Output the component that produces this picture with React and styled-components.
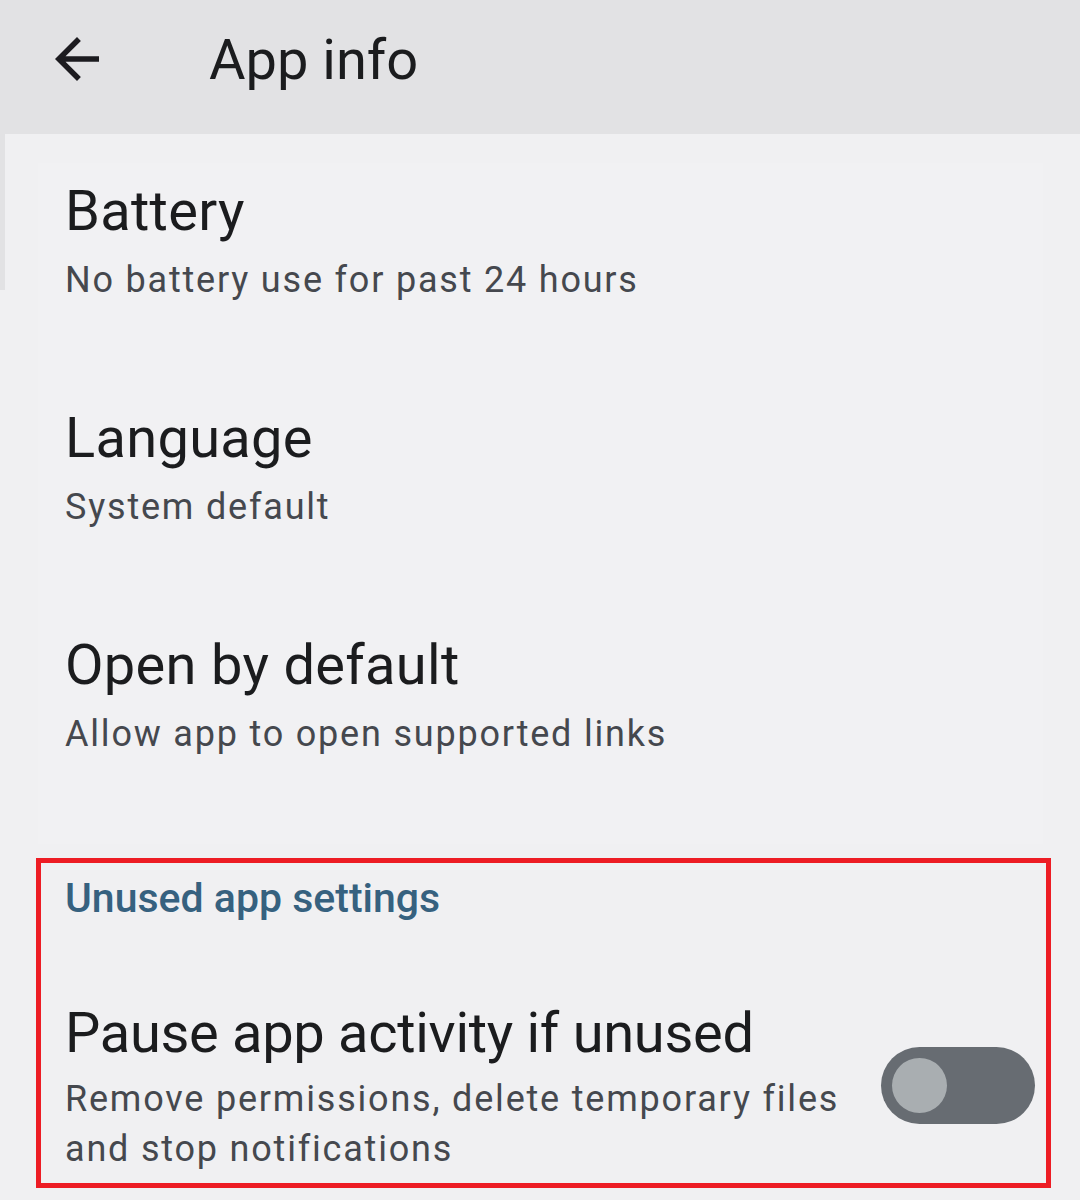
import React from "react";
import styled, { createGlobalStyle } from "styled-components";

const Global = createGlobalStyle`
  html, body { margin: 0; padding: 0; }
  body {
    background: #f0f0f2;
    font-family: Roboto, "Noto Sans", "Liberation Sans", sans-serif;
    -webkit-font-smoothing: antialiased;
  }
  * { box-sizing: border-box; }
`;

const Screen = styled.div`
  width: 1080px;
  height: 1200px;
  background: #f0f0f2;
  overflow: hidden;
  display: flex;
  flex-direction: column;
`;

const TopBar = styled.header`
  height: 134px;
  flex: none;
  background: #e2e2e4;
  display: flex;
  align-items: flex-start;
  padding: 26px 0 0 44px;
  gap: 99px;
`;

const BackButton = styled.button`
  width: 66px;
  height: 66px;
  margin-top: 0;
  padding: 0;
  border: none;
  background: transparent;
  color: #1c1b1f;
  display: flex;
  align-items: center;
  justify-content: center;
  svg { width: 66px; height: 66px; display: block; }
`;

const Title = styled.h1`
  margin: 0;
  font-size: 56px;
  line-height: 68px;
  font-weight: 400;
  color: #1b1c1e;
`;

const Content = styled.main`
  position: relative;
  flex: 1;
  padding: 29px 0 0 0;
  &::before {
    content: "";
    position: absolute;
    left: 0;
    top: 0;
    width: 5px;
    height: 156px;
    background: #e2e2e4;
  }
`;

const Card = styled.section`
  margin: 0 37px 0 38px;
  background: #f1f1f3;
  display: flex;
  flex-direction: column;
`;

const Item = styled.div`
  padding: 16px 24px 85px 27px;
  display: flex;
  flex-direction: column;
  gap: 12px;
`;

const ItemTitle = styled.div`
  font-size: 56px;
  line-height: 64px;
  color: #1b1c1e;
  letter-spacing: ${(p) => p.$spacing || "0.3px"};
`;

const ItemSub = styled.div`
  font-size: 36px;
  line-height: 50px;
  color: #45484e;
  letter-spacing: 1.8px;
`;

const Highlight = styled.section`
  margin: 14px 29px 0 36px;
  border: 5px solid #ed1c24;
  padding: 10px 11px 9px 24px;
  display: flex;
  flex-direction: column;
  gap: 78px;
`;

const SectionHeader = styled.div`
  font-size: 41px;
  line-height: 50px;
  font-weight: 500;
  color: #36617f;
`;

const ToggleRow = styled.div`
  display: flex;
  align-items: center;
  justify-content: space-between;
  gap: 20px;
`;

const ToggleText = styled.div`
  display: flex;
  flex-direction: column;
  gap: 9px;
  max-width: 790px;
`;

const Track = styled.div`
  flex: none;
  width: 154px;
  height: 77px;
  margin-top: -4px;
  border-radius: 39px;
  background: ${(p) => (p.$on ? "#35607f" : "#676c72")};
  display: flex;
  align-items: center;
  padding: 0 11px;
  justify-content: ${(p) => (p.$on ? "flex-end" : "flex-start")};
`;

const Thumb = styled.div`
  width: 55px;
  height: 55px;
  border-radius: 50%;
  background: #a9aeb1;
`;

const items = [
  { title: "Battery", sub: "No battery use for past 24 hours" },
  { title: "Language", sub: "System default" },
  { title: "Open by default", sub: "Allow app to open supported links" },
];

export default function App() {
  return (
    <>
      <Global />
      <Screen>
        <TopBar>
          <BackButton aria-label="Back">
            <svg viewBox="0 0 24 24" fill="currentColor">
              <path d="M20 11H7.83l5.59-5.59L12 4l-8 8 8 8 1.41-1.41L7.83 13H20v-2z" />
            </svg>
          </BackButton>
          <Title>App info</Title>
        </TopBar>
        <Content>
          <Card>
            {items.map((it) => (
              <Item key={it.title}>
                <ItemTitle>{it.title}</ItemTitle>
                <ItemSub>{it.sub}</ItemSub>
              </Item>
            ))}
          </Card>
          <Highlight>
            <SectionHeader>Unused app settings</SectionHeader>
            <ToggleRow>
              <ToggleText>
                <ItemTitle $spacing="-0.3px">Pause app activity if unused</ItemTitle>
                <ItemSub>Remove permissions, delete temporary files and stop notifications</ItemSub>
              </ToggleText>
              <Track $on={false}>
                <Thumb />
              </Track>
            </ToggleRow>
          </Highlight>
        </Content>
      </Screen>
    </>
  );
}
